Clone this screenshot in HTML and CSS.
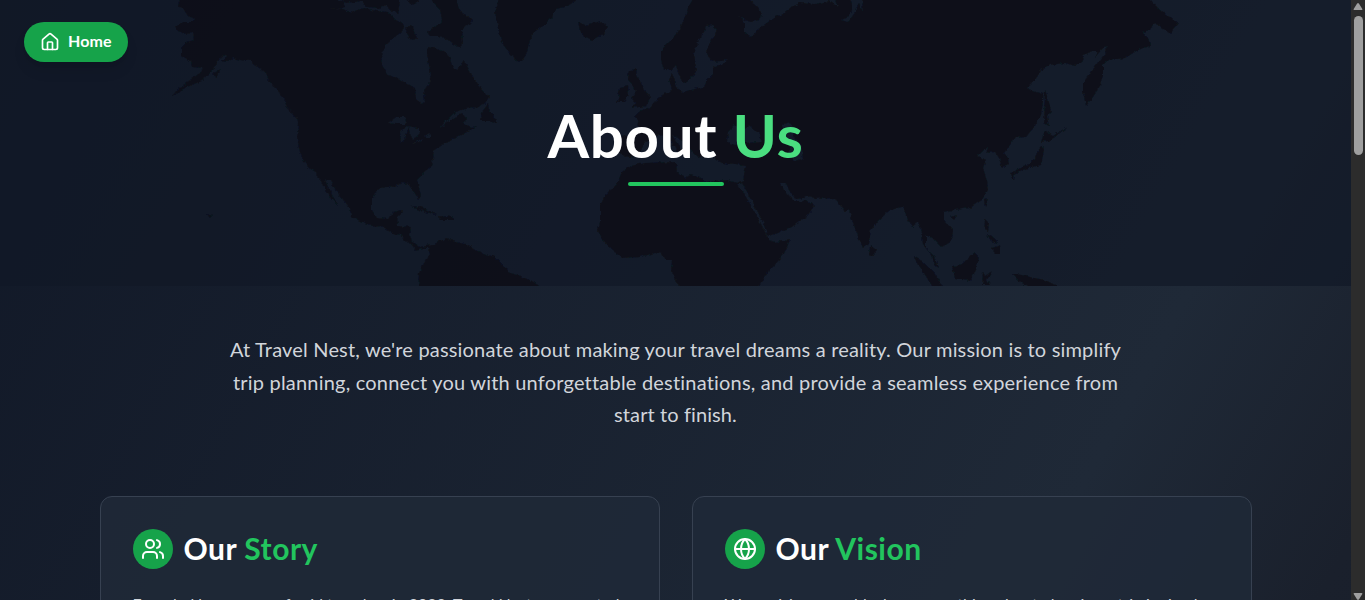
FILE: index.html
```html
<!DOCTYPE html>
<html lang="en">
<head>
<meta charset="utf-8">
<title>About Us - Travel Nest</title>
<link rel="stylesheet" href="styles.css">
</head>
<body>
<div class="window">
  <div class="page">
    <header class="hero">
      <svg class="world" viewBox="0 0 1351 286" aria-hidden="true">
        <defs><filter id="coast" x="0" y="0" width="100%" height="100%"><feTurbulence type="fractalNoise" baseFrequency="0.19" numOctaves="3" seed="4"/><feDisplacementMap in="SourceGraphic" scale="4" xChannelSelector="R" yChannelSelector="G"/></filter></defs>
        <g filter="url(#coast)" fill-rule="evenodd">
          <!-- Americas -->
          <path d="M181-5L178 6 184 10 188 16 195 19 192 22 183 22 175 26 178 31 186 34 193 33 194 40 187 42 181 48 181 55 187 59 191 61 192 67 204 68 200 73 190 80 178 89 172 96 185 88 199 82 208 75 214 69 218 61 224 54 227 56 222 61 228 62 233 58 240 60 250 61 258 67 265 73 270 82 277 90 284 98 288 107 297 115 298 122 297 138 300 152 307 167 316 172 321 182 327 193 332 200 338 206 335 200 330 191 325 180 330 180 337 192 345 202 350 208 351 216 360 221 375 227 382 226 390 232 400 235 405 241 411 244 416 250 422 248 428 248 429 256 424 263 419 272 418 292 548 292 532 281 520 276 508 272 504 266 495 257 485 254 475 250 466 244 455 242 447 238 440 241 433 245 426 246 420 247 412 241 410 235 411 227 398 226 397 220 402 210 393 212 388 219 377 218 372 210 372 198 377 190 385 186 395 187 401 183 409 184 413 190 418 199 421 195 418 184 417 180 423 174 431 167 433 158 434 151 442 145 450 141 458 136 462 135 477 126 472 127 464 124 466 118 462 113 450 120 440 128 446 121 455 112 465 109 478 108 485 103 489 97 478 84 472 75 464 60 457 70 452 66 450 58 445 52 438 49 428 47 427 55 429 65 431 75 428 85 424 90 425 102 420 104 416 98 415 88 408 84 398 78 388 75 382 65 381 55 386 45 393 39 400 33 404 25 396 20 388 12 376 11 365 8 350 12 340 8 326 9 322-5ZM388 123L396 117 404 117 407 124 395 124ZM400 131L406 127 409 128 404 140 401 143ZM408 126L418 128 420 134 413 139 410 133ZM412 144L423 138 422 141ZM424 137L431 134 431 137Z"/>
          <path d="M262-5L264 1 272 3 280-5ZM328-5L345 3 362 1 367 7 379 8 386 5 390 10 398 14 401-5ZM318-5L322 10 345 7 340-5ZM405-5L412 5 419 2 418-5ZM430-5L433 3 440 10 442 20 434 28 427 32 430 36 440 36 450 41 460 48 463 42 462 30 473 20 461 12 454-5ZM405 28L411 25 418 40 410 39ZM481 113L488 104 490 112 496 118 497 124 488 121 480 121ZM410 207L420 206 433 213 437 215 425 212ZM438 216L452 217 455 220 440 220ZM285 106L299 115 302 120 295 117ZM207 214L212 216 210 218ZM212 74L221 69 217 77Z"/>
          <!-- North Atlantic -->
          <path d="M500-5L495 12 498 28 501 40 508 52 517 60 523 61 527 52 530 40 534 32 543 26 552 17 556 9 568 6 582-5ZM578 22L586 25 593 23 602 21 607 27 604 34 593 40 584 37 580 30ZM629 70L637 69 636 75 641 83 648 95 650 99 646 106 632 108 636 102 631 98 636 92 633 85 628 80ZM620 88L628 86 629 95 624 102 617 102Z"/>
          <!-- Eurasia and Africa -->
          <path d="M695-5L688 8 683 22 677 34 669 42 661 50 661 60 664 69 671 71 676 65 679 75 683 83 687 82 693 76 697 70 695 60 694 50 699 40 704 32 706 26 712 25 717 30 713 38 708 45 707 55 713 62 728 60 722 64 713 68 713 74 707 80 704 87 690 90 683 92 677 88 675 80 672 74 669 80 672 90 664 94 658 98 650 107 640 111 634 117 639 121 638 134 618 137 614 150 630 158 640 152 645 143 655 136 665 135 672 143 678 152 682 150 678 143 672 135 684 142 690 150 698 158 704 156 700 150 712 150 714 158 722 163 746 165 743 180 737 183 728 180 715 181 706 183 700 177 690 174 685 178 677 172 676 162 645 163 630 166 622 172 616 185 605 195 600 205 600 222 598 231 603 240 612 250 622 258 640 257 655 253 662 254 666 260 672 261 671 270 676 280 682 292 754 292 770 270 783 256 790 240 775 242 769 240 760 222 748 200 737 185 742 183 752 200 762 220 768 236 778 233 795 225 808 215 814 206 806 200 800 202 794 201 784 190 780 183 785 183 792 195 797 199 803 198 807 195 815 199 835 198 840 205 845 212 849 210 852 220 858 236 863 248 869 244 871 230 878 221 890 210 903 207 908 220 912 227 918 222 922 232 923 245 930 253 935 265 938 267 934 256 926 248 926 235 935 240 942 247 952 240 953 230 944 220 944 213 955 210 970 208 982 200 988 190 987 180 983 168 986 160 978 156 984 150 988 147 986 153 995 152 999 158 1002 168 1009 165 1008 158 1004 153 1010 145 1015 138 1026 137 1035 126 1041 115 1043 102 1043 94 1036 92 1026 88 1035 80 1043 68 1050 65 1065 63 1075 66 1081 63 1084 55 1092 51 1098 51 1095 57 1104 47 1108 46 1105 54 1098 62 1090 74 1083 82 1083 92 1086 106 1093 97 1100 86 1103 75 1103 65 1108 60 1125 58 1138 50 1150 46 1148 38 1142 32 1150 30 1154 23 1160 26 1170 34 1179 23 1167 16 1160 10 1146-5 862-5 863 12 859 2 854 14 848 22 841 20 849 17 853 8 849-5 833-5 838 6 828 1 815 4 800 3 790 8 780 15 775 17 764 25 757 30 751 37 745 32 745 22 737 16 750 22 760 20 762 14 756 5 744-5ZM727 142L728 132 735 125 742 130 750 126 758 133 762 142 745 143 735 145ZM782 125L790 122 795 128 792 135 800 145 803 158 795 161 788 155 790 145 783 135Z"/>
          <!-- Pacific and Indian Ocean islands -->
          <path d="M1045 130L1054 137 1048 141 1041 142ZM1041 145L1044 150 1041 165 1032 167 1022 170 1014 175 1016 170 1028 165 1035 158ZM1010 173L1015 172 1014 181ZM1045 90L1048 98 1051 112 1047 116 1049 126 1044 123ZM1053 136L1067 127 1055 137ZM985 220L989 222 988 232 984 230ZM987 234L992 237 998 243 991 241ZM992 248L1000 245 1001 254 995 254ZM984 200L988 199 985 208ZM951 217L957 215 955 220ZM870 245L876 250 873 256 869 254ZM913 256L922 261 935 274 945 292 932 286 922 270ZM952 266L962 264 974 253 979 258 976 270 970 281 955 279ZM983 272L985 276 992 271 987 280 990 285 982 285ZM1012 274L1022 275 1030 277 1045 280 1057 286 1060 292 1035 292 1018 280Z"/>
        </g>
      </svg>
      <a class="home" href="#">
        <svg class="icon home-icon" viewBox="0 0 24 24"><path d="M15 21v-8a1 1 0 0 0-1-1h-4a1 1 0 0 0-1 1v8"/><path d="M3 10a2 2 0 0 1 .709-1.528l7-6a2 2 0 0 1 2.582 0l7 6A2 2 0 0 1 21 10v9a2 2 0 0 1-2 2H5a2 2 0 0 1-2-2z"/></svg>
        <span class="home-label">Home</span>
      </a>
      <h1 class="title">About <span class="title-accent">Us</span></h1>
      <div class="rule"></div>
    </header>
    <main class="content">
      <p class="intro"><span class="l1">At Travel Nest, we're passionate about making your travel dreams a reality. Our mission is to simplify</span><br><span class="l2">trip planning, connect you with unforgettable destinations, and provide a seamless experience from</span><br><span class="l3">start to finish.</span></p>
      <div class="cards">
        <section class="card">
          <div class="card-head">
            <span class="badge"><svg class="icon" viewBox="0 0 24 24"><path d="M16 21v-2a4 4 0 0 0-4-4H6a4 4 0 0 0-4 4v2"/><circle cx="9" cy="7" r="4"/><path d="M22 21v-2a4 4 0 0 0-3-3.87"/><path d="M16 3.13a4 4 0 0 1 0 7.75"/></svg></span>
            <h2 class="card-title">Our <span class="accent">Story</span></h2>
          </div>
          <p class="card-text">Founded by a group of avid travelers in 2023, Travel Nest was created</p>
        </section>
        <section class="card">
          <div class="card-head">
            <span class="badge"><svg class="icon" viewBox="0 0 24 24"><circle cx="12" cy="12" r="10"/><path d="M12 2a14.5 14.5 0 0 0 0 20 14.5 14.5 0 0 0 0-20"/><path d="M2 12h20"/></svg></span>
            <h2 class="card-title">Our <span class="accent">Vision</span></h2>
          </div>
          <p class="card-text">We envision a world where everything about planning a trip is simple</p>
        </section>
      </div>
    </main>
  </div>
  <div class="scrollbar" aria-hidden="true">
    <svg class="arrow" viewBox="0 0 10 8"><path d="M4 .8Q5-.6 6 .8L9.3 6Q9.7 7 8.5 7H1.5Q.3 7 .7 6Z"/></svg>
    <div class="thumb"></div>
    <svg class="arrow down" viewBox="0 0 10 8"><path d="M4 .8Q5-.6 6 .8L9.3 6Q9.7 7 8.5 7H1.5Q.3 7 .7 6Z"/></svg>
  </div>
</div>
</body>
</html>
```
FILE: styles.css
```css
* { box-sizing: border-box; }
body { margin: 0; font-family: Lato, "Open Sans", sans-serif; color: #fff; font-variant-ligatures: none; }
h1, h2, p { margin: 0; }
.window { display: flex; width: 1365px; height: 600px; overflow: hidden; background: #111827; }
.page { width: 1351px; height: 2450px; flex: none; background: linear-gradient(to bottom right, #111827, #1f2937 50%, #1a202c 61%, #111827); }
.hero { position: relative; height: 286px; padding-top: 99px; background: rgba(17, 24, 39, .7); overflow: hidden; }
.world { position: absolute; inset: 0; width: 1351px; height: 286px; fill: #0b0f16; opacity: .82; }
.home { position: absolute; left: 24px; top: 22px; display: flex; align-items: center; gap: 8px; width: 104px; height: 40px; padding-left: 16px; border-radius: 20px; background: #16a34a; color: #fff; font-size: 16px; font-weight: 700; text-decoration: none; box-shadow: 0 10px 15px -3px rgba(0,0,0,.1), 0 4px 6px -4px rgba(0,0,0,.1); }
.home-label { padding-bottom: 3px; letter-spacing: .1px; }
.icon { display: block; width: 24px; height: 24px; fill: none; stroke: #fff; stroke-width: 2; stroke-linecap: round; stroke-linejoin: round; }
.home-icon { width: 20px; height: 20px; }
.title { position: relative; height: 72px; line-height: 72px; text-align: center; font-size: 60px; font-weight: 700; letter-spacing: .7px; }
.title-accent { color: #4ade80; }
.rule { position: relative; width: 96px; height: 4px; margin: 11px auto 0; border-radius: 2px; background: #22c55e; }
.content { width: 1152px; margin: 0 auto; padding-top: 47px; }
.intro { height: 98px; text-align: center; font-size: 20px; line-height: 32.5px; color: #d1d5db; white-space: nowrap; }
.l1 { letter-spacing: .18px; }
.l2 { letter-spacing: .2px; }
.l3 { letter-spacing: .1px; }
.cards { display: grid; grid-template-columns: 1fr 1fr; gap: 32px; margin-top: 65px; }
.card { height: 360px; padding: 32px; border: 1px solid #374151; border-radius: 12px; background: rgba(31, 41, 55, .9); }
.card-head { display: flex; align-items: center; gap: 11px; height: 40px; margin-bottom: 22px; }
.badge { display: grid; place-items: center; width: 40px; height: 40px; border-radius: 50%; background: #16a34a; }
.card-title { padding-bottom: 2px; font-size: 30px; line-height: 36px; font-weight: 700; letter-spacing: .5px; }
.accent { color: #22c55e; }
.card-text { font-size: 16px; line-height: 26px; color: #d1d5db; white-space: nowrap; }
.scrollbar { display: flex; flex-direction: column; align-items: center; width: 14px; height: 600px; padding-top: 3px; background: #2c2c2c; }
.arrow { width: 10px; height: 8px; fill: #9f9f9f; flex: none; }
.thumb { width: 9px; height: 139px; margin-top: 5px; border-radius: 5px; background: #9f9f9f; }
.arrow.down { margin-top: auto; transform: rotate(180deg); }
```
